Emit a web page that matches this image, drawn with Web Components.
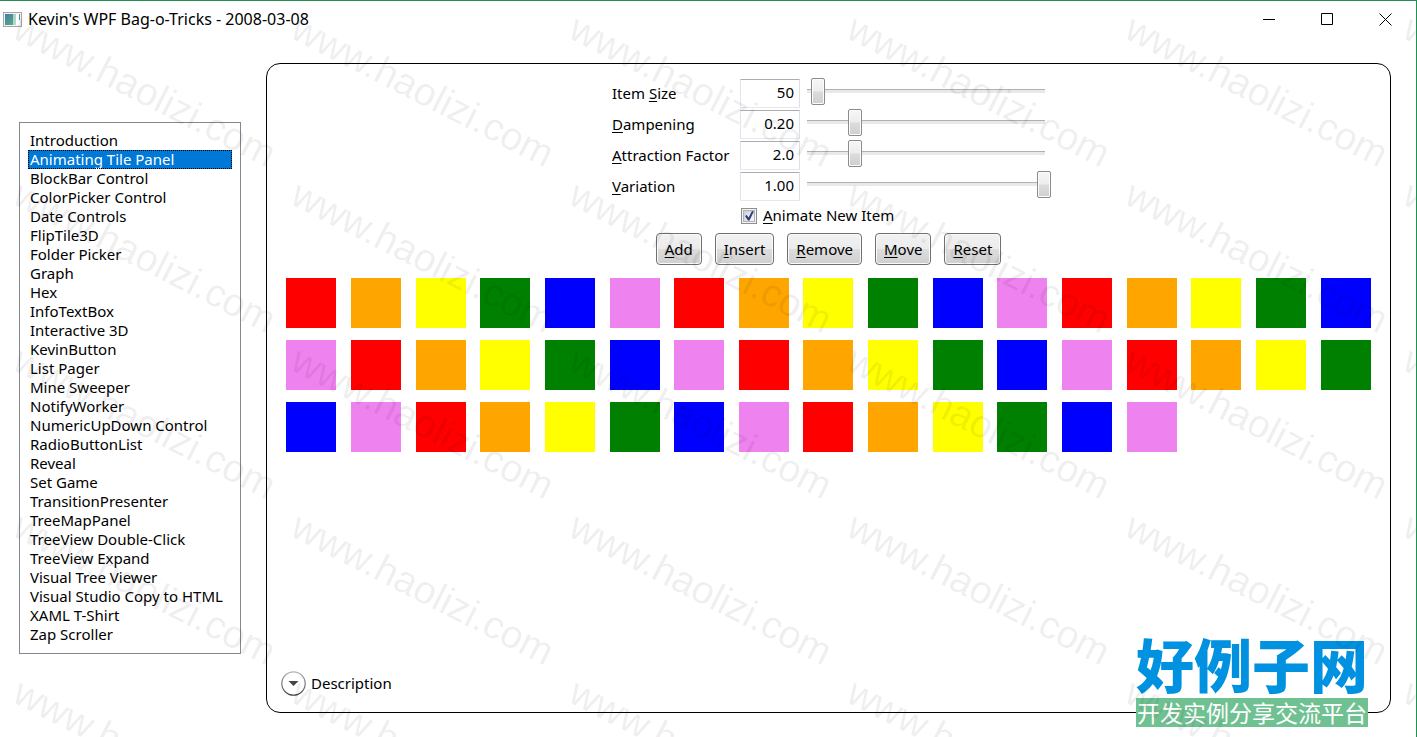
<!DOCTYPE html>
<html lang="en">
<head>
<meta charset="utf-8">
<meta name="viewport" content="width=device-width, initial-scale=1">
<title>Kevin's WPF Bag-o-Tricks - 2008-03-08</title>
<style>
    html, body { height: 100%; margin: 0; }
    body {
        background: #fff;
        color: #000;
        font: 15px/19px 'Noto Sans', 'Open Sans', 'Noto Sans CJK SC', sans-serif;
    }
</style>
</head>
<body>
<app-window>
    <title-bar slot="title">Kevin's WPF Bag-o-Tricks - 2008-03-08</title-bar>
    <demo-list slot="nav" selected="Animating Tile Panel"></demo-list>
    <demo-panel>
        <div slot="settings">
            <number-slider label="Item _Size" value="50" min="10" max="1000" step="1"></number-slider>
            <number-slider label="_Dampening" value="0.20" min="0" max="1" step="0.01"></number-slider>
            <number-slider label="_Attraction Factor" value="2.0" min="0" max="10" step="0.1"></number-slider>
            <number-slider label="_Variation" value="1.00" min="0" max="1" step="0.01"></number-slider>
            <check-option label="_Animate New Item" checked></check-option>
        </div>
        <push-button slot="actions" label="_Add"></push-button>
        <push-button slot="actions" label="_Insert"></push-button>
        <push-button slot="actions" label="_Remove"></push-button>
        <push-button slot="actions" label="_Move"></push-button>
        <push-button slot="actions" label="_Reset"></push-button>
        <tile-panel count="48"></tile-panel>
        <expander-header slot="footer">Description</expander-header>
    </demo-panel>
    <site-logo slot="overlay"></site-logo>
    <water-mark slot="overlay" text="www.haolizi.com"></water-mark>
</app-window>

<script>
/** Base class: clones the subclass template into an open shadow root. */
class BaseElement extends HTMLElement {
    constructor() {
        super();
        const template = document.createElement('template');
        template.innerHTML = this.constructor.markup;
        this.attachShadow({ mode: 'open' }).appendChild(template.content.cloneNode(true));
    }

    $(selector) {
        return this.shadowRoot.querySelector(selector);
    }
}

/**
 * Fill an element with label text, underlining the access key.
 * @param {HTMLElement} target
 * @param {string} label - Text with "_" before the access key
 * @returns {string} the access key
 */
const setAccessText = (target, label) => {
    const [before, rest] = label.split('_');
    const key = document.createElement('u');
    key.textContent = rest[0];
    target.replaceChildren(before, key, rest.slice(1));
    return rest[0].toLowerCase();
};

const ACCESS_STYLE = `
    u { text-decoration: underline; text-decoration-thickness: 1px; text-underline-offset: 2px; text-decoration-skip-ink: none; }
`;

class AppWindow extends BaseElement {
    static markup = `
        <style>
            :host {
                position: relative;
                display: flex;
                flex-direction: column;
                box-sizing: border-box;
                min-height: 100vh;
                border-top: 1px solid #219150;
                border-right: 1px solid #219150;
                overflow: hidden;
            }
            main {
                flex: 1;
                display: grid;
                grid-template-columns: auto 1fr;
                gap: 25px;
                padding: 26px 25px 24px 19px;
            }
            nav { align-self: center; }
        </style>
        <slot name="title"></slot>
        <main>
            <nav><slot name="nav"></slot></nav>
            <slot></slot>
        </main>
        <slot name="overlay"></slot>
    `;
}
customElements.define('app-window', AppWindow);

class TitleBar extends BaseElement {
    static markup = `
        <style>
            :host { display: flex; align-items: center; height: 36px; padding: 0 2px 0 3px; font-size: 16px; }
            h1 { flex: 1; margin: 0 0 0 6px; font: inherit; }
            button {
                width: 58px;
                height: 36px;
                padding: 0;
                border: 0;
                background: none;
            }
            button:hover { background: #e5e5e5; }
            button svg { display: block; margin: auto; }
        </style>
        <svg width="19" height="15" viewBox="0 0 19 15" aria-hidden="true">
            <defs>
                <linearGradient id="screen" x2="1" y2="1">
                    <stop offset="0" stop-color="#4a78a8"/>
                    <stop offset="1" stop-color="#56b87c"/>
                </linearGradient>
            </defs>
            <rect x=".5" y=".5" width="18" height="14" fill="#f3f3f3" stroke="#a6a6a6"/>
            <rect x="2" y="2" width="11" height="11" fill="url(#screen)"/>
            <rect x="10" y="2" width="7" height="11" fill="#fff" opacity=".55"/>
            <rect x="13" y="2" width="4" height="11" fill="#fff"/>
            <rect x="16" y="2" width="1" height="6" fill="#4e8f98"/>
        </svg>
        <h1><slot></slot></h1>
        <button type="button" aria-label="Minimize">
            <svg width="13" height="13"><path d="M0 6.5h12" stroke="#000"/></svg>
        </button>
        <button type="button" aria-label="Maximize">
            <svg width="13" height="13"><path d="M.5 .5h11v11h-11z" fill="none" stroke="#000"/></svg>
        </button>
        <button type="button" aria-label="Close">
            <svg width="13" height="13"><path d="M.5 .5l12 12m0-12l-12 12" stroke="#000"/></svg>
        </button>
    `;
}
customElements.define('title-bar', TitleBar);

const DEMOS = [
    'Introduction', 'Animating Tile Panel', 'BlockBar Control', 'ColorPicker Control',
    'Date Controls', 'FlipTile3D', 'Folder Picker', 'Graph', 'Hex', 'InfoTextBox',
    'Interactive 3D', 'KevinButton', 'List Pager', 'Mine Sweeper', 'NotifyWorker',
    'NumericUpDown Control', 'RadioButtonList', 'Reveal', 'Set Game',
    'TransitionPresenter', 'TreeMapPanel', 'TreeView Double-Click', 'TreeView Expand',
    'Visual Tree Viewer', 'Visual Studio Copy to HTML', 'XAML T-Shirt', 'Zap Scroller',
];

class DemoList extends BaseElement {
    static markup = `
        <style>
            :host {
                display: block;
                box-sizing: border-box;
                min-width: 222px;
                padding: 8px 8px 9px;
                border: 1px solid #828790;
            }
            ul { margin: 0; padding: 0; list-style: none; }
            a {
                display: block;
                box-sizing: border-box;
                height: 19px;
                padding: 0 0 0 2px;
                color: inherit;
                text-decoration: none;
                white-space: nowrap;
            }
            a[aria-current] {
                background: #0078d7;
                color: #fff;
                outline: 1px dotted #000;
                outline-offset: -1px;
            }
        </style>
        <ul></ul>
    `;

    connectedCallback() {
        const items = DEMOS.map((name) => {
            const item = document.createElement('li');
            const link = document.createElement('a');
            link.href = '#';
            link.textContent = name;
            if (name === this.getAttribute('selected')) link.setAttribute('aria-current', 'page');
            item.appendChild(link);
            return item;
        });
        this.$('ul').replaceChildren(...items);
        this.shadowRoot.addEventListener('click', (e) => this.#select(e));
    }

    #select(e) {
        const link = e.target.closest('a');
        if (!link) return;
        e.preventDefault();
        this.$('[aria-current]')?.removeAttribute('aria-current');
        link.setAttribute('aria-current', 'page');
    }
}
customElements.define('demo-list', DemoList);

class DemoPanel extends BaseElement {
    static markup = `
        <style>
            :host {
                display: flex;
                flex-direction: column;
                padding: 15px 12px 16px;
                border: 1px solid #000;
                border-radius: 14px;
            }
            .settings { align-self: center; }
            .actions { display: flex; justify-content: center; gap: 13px; margin: 8px 0 13px; }
            .content { flex: 1; }
        </style>
        <div class="settings"><slot name="settings"></slot></div>
        <div class="actions"><slot name="actions"></slot></div>
        <div class="content"><slot></slot></div>
        <slot name="footer"></slot>
    `;
}
customElements.define('demo-panel', DemoPanel);

class NumberSlider extends BaseElement {
    static markup = `
        <style>
            ${ACCESS_STYLE}
            :host {
                display: grid;
                grid-template-columns: 121px 60px 238px;
                column-gap: 7px;
                align-items: center;
                margin-bottom: 2px;
            }
            label { white-space: nowrap; }
            input { margin: 0; font: inherit; color: inherit; }
            .value {
                box-sizing: border-box;
                width: 60px;
                height: 29px;
                padding: 0 5px 4px;
                border: 1px solid #e2e3ea;
                border-color: #abadb3 #dbdfe6 #e3e9ef #e2e3ea;
                border-radius: 1px;
                text-align: right;
            }
            .slider {
                appearance: none;
                width: 250px;
                height: 27px;
                margin: -4px -6px 0;
                background: linear-gradient(#b0b0b0 1px, #e7eaea 1px) 6px 11px / 238px 4px no-repeat;
            }
            .slider::-webkit-slider-thumb {
                appearance: none;
                box-sizing: border-box;
                width: 14px;
                height: 27px;
                border: 1px solid #8b8b8b;
                border-radius: 2px;
                background: linear-gradient(#f6f6f6, #ededed 48%, #dcdcdc 52%, #cfcfcf);
                box-shadow: inset 0 0 0 1px #fcfcfc;
            }
        </style>
        <label for="value"></label>
        <input id="value" class="value" type="text" inputmode="decimal">
        <input class="slider" type="range">
    `;

    connectedCallback() {
        const label = this.getAttribute('label');
        const value = this.$('.value');
        const slider = this.$('.slider');
        value.accessKey = setAccessText(this.$('label'), label);
        value.value = this.getAttribute('value');
        for (const name of ['min', 'max', 'step', 'value']) {
            slider.setAttribute(name, this.getAttribute(name));
        }
        slider.setAttribute('aria-label', label.replace('_', ''));

        const digits = (this.getAttribute('value').split('.')[1] || '').length;
        slider.addEventListener('input', () => { value.value = Number(slider.value).toFixed(digits); });
        value.addEventListener('change', () => { slider.value = value.value; });
    }
}
customElements.define('number-slider', NumberSlider);

class CheckOption extends BaseElement {
    static markup = `
        <style>
            ${ACCESS_STYLE}
            :host { display: flex; align-items: center; gap: 6px; padding: 3px 0 0 129px; }
            input {
                appearance: none;
                box-sizing: border-box;
                width: 16px;
                height: 16px;
                margin: 0;
                border: 1px solid #8e8f8f;
                background: #f4f4f4;
                box-shadow: inset 0 0 0 1px #f4f4f4, inset 0 0 0 2px #aeb3b9, inset 3px 3px 7px #c3c8d0;
            }
            .box { position: relative; display: flex; }
            svg { position: absolute; inset: 0; pointer-events: none; visibility: hidden; }
            input:checked + svg { visibility: visible; }
        </style>
        <span class="box">
            <input id="check" type="checkbox">
            <svg width="16" height="16" aria-hidden="true">
                <path d="M4 8l1.600-1 2 2.600L11 3l1.800.5L8.500 12.500H7z" fill="#313c80"/>
            </svg>
        </span>
        <label for="check"></label>
    `;

    connectedCallback() {
        const input = this.$('input');
        input.accessKey = setAccessText(this.$('label'), this.getAttribute('label'));
        input.checked = this.hasAttribute('checked');
    }
}
customElements.define('check-option', CheckOption);

class PushButton extends BaseElement {
    static markup = `
        <style>
            ${ACCESS_STYLE}
            :host { display: block; }
            button {
                height: 32px;
                padding: 0 8px;
                border: 1px solid #707070;
                border-radius: 4px;
                background: linear-gradient(#f2f2f2, #ebebeb 50%, #dddddd 50%, #cfcfcf);
                box-shadow: inset 0 0 0 1px #fafafa;
                color: inherit;
                font: inherit;
            }
            button:active { background: #c4e5f6; }
        </style>
        <button type="button"></button>
    `;

    connectedCallback() {
        const button = this.$('button');
        button.accessKey = setAccessText(button, this.getAttribute('label'));
    }
}
customElements.define('push-button', PushButton);

const TILE_COLORS = ['red', 'orange', 'yellow', 'green', 'blue', 'violet'];

class TilePanel extends BaseElement {
    static markup = `
        <style>
            :host {
                display: grid;
                grid-template-columns: repeat(auto-fill, minmax(62px, 1fr));
                row-gap: 12px;
                justify-items: center;
            }
            .tile { width: 50px; height: 50px; }
        </style>
    `;

    connectedCallback() {
        const count = Number(this.getAttribute('count'));
        for (let i = 0; i < count; i++) {
            const tile = document.createElement('div');
            tile.className = 'tile';
            tile.style.background = TILE_COLORS[i % TILE_COLORS.length];
            this.shadowRoot.appendChild(tile);
        }
    }
}
customElements.define('tile-panel', TilePanel);

class ExpanderHeader extends BaseElement {
    static markup = `
        <style>
            :host { display: block; }
            button {
                display: flex;
                align-items: center;
                gap: 5px;
                padding: 0 0 0 2px;
                border: 0;
                background: none;
                color: inherit;
                font: inherit;
            }
        </style>
        <button type="button" aria-expanded="false">
            <svg width="25" height="25" aria-hidden="true">
                <defs>
                    <linearGradient id="ring" x2="0" y2="1">
                        <stop offset="0" stop-color="#b4b4b4"/>
                        <stop offset="1" stop-color="#444"/>
                    </linearGradient>
                </defs>
                <circle cx="12.500" cy="12.500" r="11.700" fill="#fff" stroke="url(#ring)" stroke-width="1.200"/>
                <path d="M7.500 10h10l-5 5z" fill="#444"/>
            </svg>
            <slot></slot>
        </button>
    `;
}
customElements.define('expander-header', ExpanderHeader);

class SiteLogo extends BaseElement {
    static markup = `
        <style>
            :host {
                position: absolute;
                right: 48px;
                bottom: 10px;
                font-family: 'Noto Sans CJK SC', sans-serif;
                white-space: nowrap;
                pointer-events: none;
            }
            .name {
                padding-bottom: 4px;
                color: #0092e0;
                font-size: 58px;
                font-weight: 900;
                line-height: 62px;
            }
            .tagline {
                padding: 0 1px;
                background: #70c192;
                color: #fff;
                font-size: 23px;
                line-height: 29px;
            }
        </style>
        <div class="name">好例子网</div>
        <div class="tagline">开发实例分享交流平台</div>
    `;
}
customElements.define('site-logo', SiteLogo);

class WaterMark extends BaseElement {
    static markup = `
        <style>
            :host {
                position: absolute;
                inset: 0;
                display: grid;
                grid-template-columns: repeat(6, 278px);
                grid-auto-rows: 166px;
                padding-left: 10px;
                overflow: hidden;
                color: rgba(0, 0, 0, .075);
                font: 39px/46px 'Liberation Sans', sans-serif;
                pointer-events: none;
                user-select: none;
            }
            span { transform: rotate(27deg); transform-origin: 0 37px; white-space: nowrap; }
        </style>
    `;

    connectedCallback() {
        for (let i = 0; i < 30; i++) {
            const mark = document.createElement('span');
            mark.textContent = this.getAttribute('text');
            this.shadowRoot.appendChild(mark);
        }
    }
}
customElements.define('water-mark', WaterMark);
</script>
</body>
</html>
